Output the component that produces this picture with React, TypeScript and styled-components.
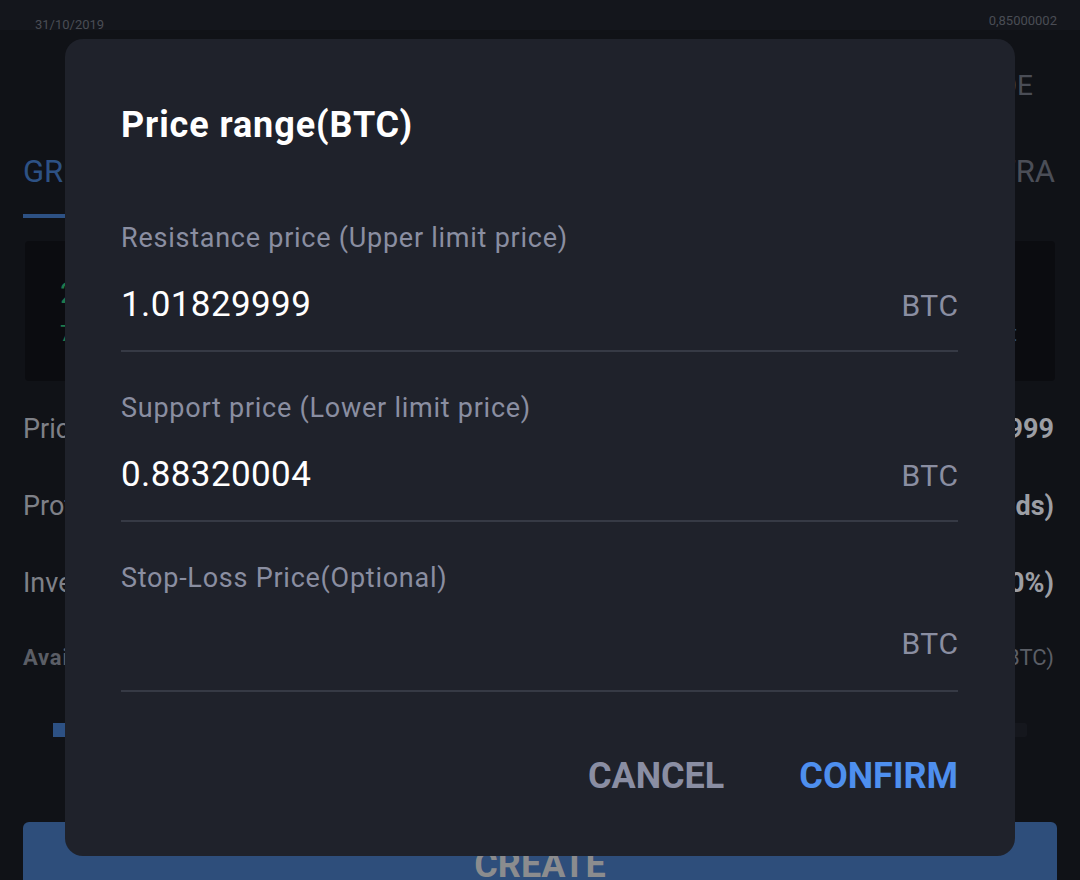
import React from "react";
import styled, { createGlobalStyle } from "styled-components";

const GlobalStyle = createGlobalStyle`
  html, body {
    margin: 0;
    padding: 0;
    background: #101217;
  }
  body {
    font-family: Roboto, "Liberation Sans", sans-serif;
  }
`;

const Page = styled.div`
  position: relative;
  width: 1080px;
  height: 880px;
  overflow: hidden;
  background: #101217;
`;

const Screen = styled.div`
  display: flex;
  flex-direction: column;
  height: 100%;

  & > * {
    flex-shrink: 0;
  }
`;

const TopBar = styled.div`
  height: 40px;
  display: flex;
  justify-content: space-between;
  align-items: flex-start;
  padding: 0 23px 0 35px;
  background: linear-gradient(#14161c 0, #14161c 30px, #101217 30px);
`;

const TinyText = styled.span<{ $top: number }>`
  font-size: 13px;
  line-height: 16px;
  color: #4a4d55;
  margin-top: ${(p) => p.$top}px;
`;

const ModeRow = styled.div`
  height: 90px;
  display: flex;
  justify-content: flex-end;
  align-items: center;
  padding: 0 47px 0 23px;
`;

const ModeLabel = styled.span`
  font-size: 28px;
  color: #4a4d56;
`;

const TabRow = styled.div`
  height: 90px;
  display: flex;
  justify-content: space-between;
  align-items: flex-start;
  padding: 0 25px 0 23px;
`;

const Tab = styled.div<{ $active?: boolean }>`
  display: flex;
  flex-direction: column;
  padding-top: 24px;
  font-size: 31px;
  line-height: 36px;
  color: ${(p) => (p.$active ? "#2d5184" : "#4b4e57")};

  &::after {
    content: "";
    display: ${(p) => (p.$active ? "block" : "none")};
    height: 4px;
    margin-top: 24px;
    background: #2d5184;
  }
`;

const StatsCard = styled.div`
  margin: 21px 25px 0 25px;
  height: 140px;
  background: #0b0c10;
  border-radius: 4px;
  display: flex;
  justify-content: space-between;
  padding: 0 38px 0 35px;
`;

const StatCol = styled.div<{ $align: "left" | "right" }>`
  display: flex;
  flex-direction: column;
  align-items: ${(p) => (p.$align === "left" ? "flex-start" : "flex-end")};
  justify-content: center;
  gap: 10px;
`;

const StatBig = styled.span`
  font-size: 30px;
  line-height: 36px;
  color: #1d7a4e;
`;

const StatSmall = styled.span<{ $blue?: boolean }>`
  font-size: 22px;
  line-height: 26px;
  color: ${(p) => (p.$blue ? "#2d4e80" : "#1d7a4e")};
`;

const InfoRow = styled.div<{ $h: number }>`
  height: ${(p) => p.$h}px;
  display: flex;
  justify-content: space-between;
  align-items: center;
  padding: 0 26px 0 23px;
`;

const InfoLabel = styled.span<{ $small?: boolean }>`
  font-size: ${(p) => (p.$small ? 22 : 27)}px;
  font-weight: ${(p) => (p.$small ? 700 : 400)};
  letter-spacing: ${(p) => (p.$small ? 0.8 : 0)}px;
  color: ${(p) => (p.$small ? "#5b5e66" : "#7e8087")};
`;

const InfoValue = styled.span<{ $small?: boolean }>`
  font-size: ${(p) => (p.$small ? 22 : 27)}px;
  font-weight: ${(p) => (p.$small ? 400 : 700)};
  color: ${(p) => (p.$small ? "#5b5e66" : "#9c9ea4")};
`;

const SliderRow = styled.div`
  height: 74px;
  display: flex;
  align-items: center;
  padding: 0 53px;
`;

const SliderTrack = styled.div`
  flex: 1;
  height: 14px;
  display: flex;
  background: #15171d;
  border-radius: 2px;
`;

const SliderFill = styled.div`
  width: 12px;
  background: #2d5184;
`;

const CreateButton = styled.div`
  margin: 55px 23px 0 23px;
  height: 80px;
  border-radius: 6px;
  background: #2e4e7b;
  display: flex;
  justify-content: center;
  padding-top: 22px;
  box-sizing: border-box;
  font-size: 36px;
  font-weight: 700;
  line-height: 42px;
  color: #8b8c8e;
`;

const Modal = styled.div`
  position: absolute;
  left: 65px;
  top: 39px;
  width: 950px;
  height: 817px;
  box-sizing: border-box;
  border-radius: 18px;
  background: #1f222b;
  padding: 65px 57px 0 56px;
  display: flex;
  flex-direction: column;
`;

const Title = styled.h2`
  margin: 0;
  font-size: 36px;
  line-height: 42px;
  font-weight: 700;
  letter-spacing: 0.9px;
  color: #ffffff;
`;

const Fields = styled.div`
  margin-top: 77px;
  display: flex;
  flex-direction: column;
  gap: 41px;
`;

const Field = styled.div`
  display: flex;
  flex-direction: column;
  border-bottom: 2px solid #363a45;
  padding-bottom: 24px;
`;

const FieldLabel = styled.span`
  font-size: 27px;
  line-height: 30px;
  letter-spacing: 0.75px;
  color: #8a8ea1;
`;

const FieldInput = styled.div`
  margin-top: 31px;
  display: flex;
  justify-content: space-between;
  align-items: baseline;
  height: 42px;
`;

const FieldValue = styled.span`
  font-size: 35px;
  line-height: 42px;
  letter-spacing: 0.4px;
  color: #ffffff;
`;

const Unit = styled.span`
  font-size: 30px;
  line-height: 40px;
  letter-spacing: 0.6px;
  margin-right: -0.6px;
  color: #8a8ea1;
`;

const Actions = styled.div`
  margin-top: 63px;
  display: flex;
  justify-content: flex-end;
  gap: 75px;
`;

const ActionButton = styled.button<{ $primary?: boolean }>`
  border: none;
  background: transparent;
  padding: 0;
  font-family: Roboto, "Liberation Sans", sans-serif;
  font-size: 36px;
  line-height: 42px;
  font-weight: 700;
  color: ${(p) => (p.$primary ? "#4e8fee" : "#8a8ea3")};
  cursor: pointer;
`;

const fields = [
  { label: "Resistance price (Upper limit price)", value: "1.01829999" },
  { label: "Support price (Lower limit price)", value: "0.88320004" },
  { label: "Stop-Loss Price(Optional)", value: "" },
];

const info = [
  { label: "Price range", value: "0.88320004 - 1.01829999" },
  { label: "Profit per grid", value: "0.51% - 0.76% (6 grids)" },
  { label: "Investment", value: "0.00000000 (0%)" },
];

export default function App() {
  return (
    <>
      <GlobalStyle />
      <Page>
        <Screen>
          <TopBar>
            <TinyText $top={17}>31/10/2019</TinyText>
            <TinyText $top={13}>0,85000002</TinyText>
          </TopBar>
          <ModeRow>
            <ModeLabel>TRADE</ModeLabel>
          </ModeRow>
          <TabRow>
            <Tab $active>GRID TRADING</Tab>
            <Tab>EXTRA</Tab>
          </TabRow>
          <StatsCard>
            <StatCol $align="left">
              <StatBig>2.18%</StatBig>
              <StatSmall>7 days annualized</StatSmall>
            </StatCol>
            <StatCol $align="right">
              <StatBig>&nbsp;</StatBig>
              <StatSmall $blue>Backtest</StatSmall>
            </StatCol>
          </StatsCard>
          <div style={{ height: 9 }} />
          {info.map((row) => (
            <InfoRow key={row.label} $h={77}>
              <InfoLabel>{row.label}</InfoLabel>
              <InfoValue>{row.value}</InfoValue>
            </InfoRow>
          ))}
          <InfoRow $h={72}>
            <InfoLabel $small>Available</InfoLabel>
            <InfoValue $small>0.00000000 (BTC)</InfoValue>
          </InfoRow>
          <SliderRow>
            <SliderTrack>
              <SliderFill />
            </SliderTrack>
          </SliderRow>
          <CreateButton>CREATE</CreateButton>
        </Screen>

        <Modal>
          <Title>Price range(BTC)</Title>
          <Fields>
            {fields.map((f) => (
              <Field key={f.label}>
                <FieldLabel>{f.label}</FieldLabel>
                <FieldInput>
                  <FieldValue>{f.value}</FieldValue>
                  <Unit>BTC</Unit>
                </FieldInput>
              </Field>
            ))}
          </Fields>
          <Actions>
            <ActionButton>CANCEL</ActionButton>
            <ActionButton $primary>CONFIRM</ActionButton>
          </Actions>
        </Modal>
      </Page>
    </>
  );
}
